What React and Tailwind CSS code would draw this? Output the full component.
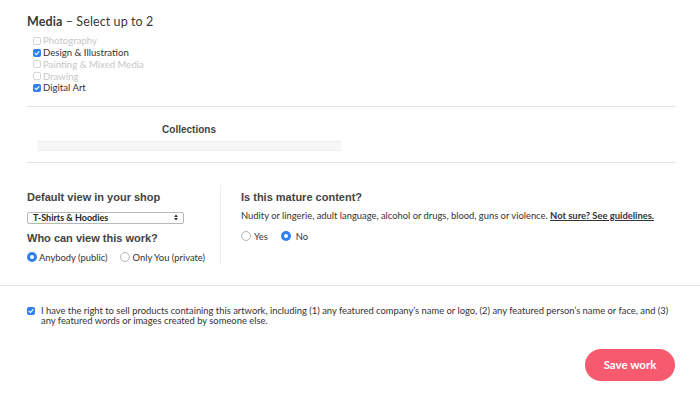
import React from 'react';

const Box = ({ checked }) =>
    checked ? (
        <span className="w-[8px] h-[8px] rounded-[2px] bg-[#2f80ed] flex items-center justify-center shrink-0">
            <svg width="6" height="6" viewBox="0 0 6 6" fill="none">
                <path d="M1 3.2 L2.4 4.6 L5 1.6" stroke="#fff" strokeWidth="1.1" strokeLinecap="round" strokeLinejoin="round" />
            </svg>
        </span>
    ) : (
        <span className="w-[8px] h-[8px] rounded-[2px] border border-[#d6d6d6] bg-white shrink-0" />
    );

const Radio = ({ checked }) =>
    checked ? (
        <span className="w-[10px] h-[10px] rounded-full bg-[#2f80ed] flex items-center justify-center shrink-0">
            <span className="w-[4px] h-[4px] rounded-full bg-white" />
        </span>
    ) : (
        <span className="w-[10px] h-[10px] rounded-full border border-[#b5b5b5] bg-white shrink-0" />
    );

const media = [
    { label: 'Photography', checked: false },
    { label: 'Design & Illustration', checked: true },
    { label: 'Painting & Mixed Media', checked: false },
    { label: 'Drawing', checked: false },
    { label: 'Digital Art', checked: true },
];

const App = () => {
    return (
        <div className="w-[700px] h-[395px] bg-white overflow-hidden font-['Lato',sans-serif] text-[#333]">
            <div className="pl-[27px] w-[675px]">
                <h2 className="pt-[14px] text-[12.5px] leading-[16px] text-[#3a3a3a] tracking-[0.1px]">
                    <span className="font-bold">Media</span> – Select up to 2
                </h2>
                <div className="mt-[5px] pl-[6px] flex flex-col">
                    {media.map((m) => (
                        <label key={m.label} className="flex items-center gap-[2px] h-[11.75px]">
                            <Box checked={m.checked} />
                            <span className={`text-[9.6px] leading-[11px] ${m.checked ? 'text-[#333]' : 'text-[#c8c8c8]'}`}>
                                {m.label}
                            </span>
                        </label>
                    ))}
                </div>

                <div className="mt-[12px] border-t border-[#e2e2e2]" />

                <div className="pt-[16px] pb-[11px]">
                    <div className="w-[304px] ml-[10px]">
                        <p className="text-center font-['Liberation_Sans',sans-serif] font-bold text-[10px] leading-[13px] text-[#444]">
                            Collections
                        </p>
                        <div className="mt-[5px] h-[10px] bg-[#f7f7f7] border-t border-b border-[#eeeeee]" />
                    </div>
                </div>

                <div className="border-t border-[#e2e2e2]" />

                <div className="flex mt-[22px]">
                    <div className="w-[194px] pr-[10px] pt-[5px] border-r border-[#eeeeee] h-[80px]">
                        <h3 className="font-['Liberation_Sans',sans-serif] font-bold text-[11px] leading-[14px] text-[#444]">
                            Default view in your shop
                        </h3>
                        <div className="mt-[8px] w-[157px] h-[12px] border border-[#b8b8b8] rounded-[2px] flex items-center justify-between px-[5px]">
                            <span className="text-[9px] leading-[10px] font-bold text-[#222]">T-Shirts &amp; Hoodies</span>
                            <svg width="4" height="7" viewBox="0 0 4 7">
                                <path d="M0 3 L2 0.5 L4 3 Z M0 4 L2 6.5 L4 4 Z" fill="#333" />
                            </svg>
                        </div>
                        <h3 className="mt-[7px] font-['Liberation_Sans',sans-serif] font-bold text-[11px] leading-[14px] text-[#444]">
                            Who can view this work?
                        </h3>
                        <div className="mt-[7px] flex items-center text-[9.4px] leading-[11px] text-[#333]">
                            <label className="flex items-center gap-[2px]">
                                <Radio checked />
                                <span>Anybody (public)</span>
                            </label>
                            <label className="flex items-center gap-[3px] ml-[12px]">
                                <Radio />
                                <span>Only You (private)</span>
                            </label>
                        </div>
                    </div>
                    <div className="pl-[20px] pt-[5px]">
                        <h3 className="font-['Liberation_Sans',sans-serif] font-bold text-[11px] leading-[14px] text-[#444]">
                            Is this mature content?
                        </h3>
                        <p className="mt-[6px] text-[9.4px] leading-[11px] text-[#333] whitespace-nowrap">
                            Nudity or lingerie, adult language, alcohol or drugs, blood, guns or violence.{' '}
                            <span className="underline font-bold">Not sure? See guidelines.</span>
                        </p>
                        <div className="mt-[10px] flex items-center text-[9.4px] leading-[11px] text-[#333]">
                            <label className="flex items-center gap-[3px]">
                                <Radio />
                                <span>Yes</span>
                            </label>
                            <label className="flex items-center gap-[5px] ml-[13px]">
                                <Radio checked />
                                <span>No</span>
                            </label>
                        </div>
                    </div>
                </div>
            </div>

            <div className="mt-[20px] border-t border-[#e2e2e2]" />

            <div className="pl-[27px] pr-[25px] pt-[20px] flex items-start gap-[6px]">
                <span className="mt-[1px]">
                    <Box checked />
                </span>
                <p className="text-[9.4px] leading-[10px] text-[#333]">
                    I have the right to sell products containing this artwork, including (1) any featured company’s name or logo, (2) any featured person’s name or face, and (3) any featured words or images created by someone else.
                </p>
            </div>

            <div className="flex justify-end pr-[25px] pt-[23px]">
                <button className="w-[90px] h-[32px] rounded-full bg-[#f65a6e] text-white text-[11.5px] font-bold">
                    Save work
                </button>
            </div>
        </div>
    );
};

export default App;
